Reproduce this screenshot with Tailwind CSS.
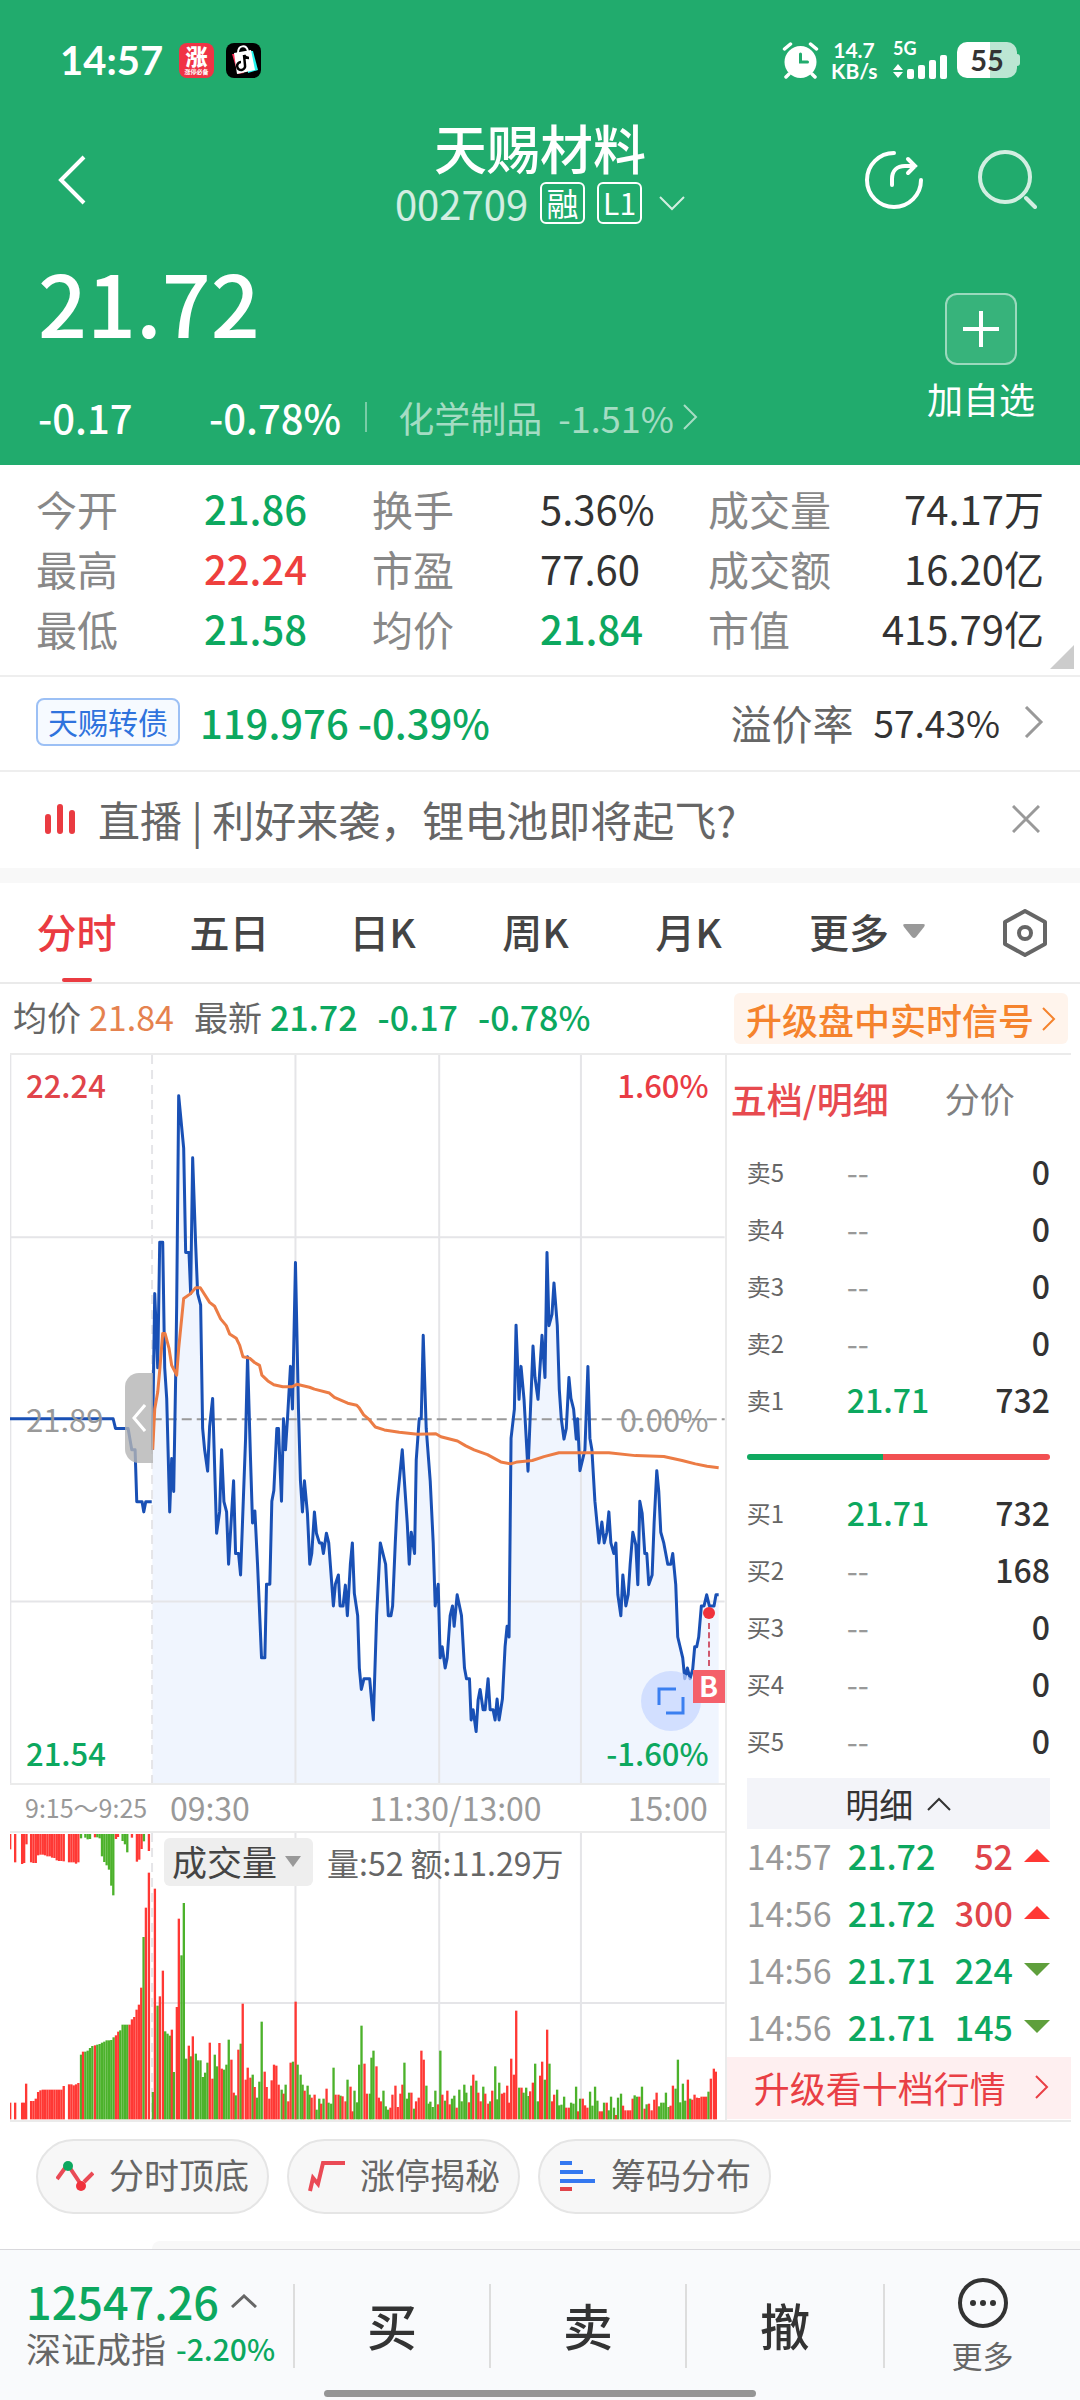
<!DOCTYPE html>
<html lang="zh-CN">
  <head>
    <meta charset="UTF-8" />
    <meta name="viewport" content="width=device-width, initial-scale=1.0" />
    <title>天赐材料 002709</title>
    <script src="https://cdn.jsdelivr.net/npm/@tailwindcss/browser@4"></script>
  </head>
  <body class="bg-white font-['Noto_Sans_CJK_SC','Noto_Sans',sans-serif] text-[#333333]">
    <!-- header -->
    <header class="bg-[#21ab6d] text-white pt-[38px]">
      <div class="h-11 flex items-center justify-between px-[60px] font-['Lato','Noto_Sans_CJK_SC',sans-serif]">
        <div class="flex items-center">
          <span class="text-[40px] leading-[44px] font-bold">14:57</span>
          <span class="ml-4 size-[35px] rounded-lg bg-[#f03345] flex flex-col items-center justify-center">
            <span class="text-[22px] leading-[23px] font-black">涨</span>
            <span class="text-[6px] leading-[8px] font-bold">涨停必备</span>
          </span>
          <svg class="ml-3 size-[35px]" viewBox="0 0 35 35">
            <rect width="35" height="35" rx="8" fill="#000" />
            <path d="M6 11h8l4 19-6 1z" fill="#fe2c55" />
            <path d="M22 8h5l5 19-10 3z" fill="#25f4ee" />
            <path d="M8 10l17-3 4 20-18 4z" fill="#fff" />
            <path d="M12 10c0-8 8-9 10-2" fill="none" stroke="#fff" stroke-width="2" />
            <path d="M18 12l1 10a4 4 0 1 1-4-3M18 12c1 3 3 3 5 3" fill="none" stroke="#000" stroke-width="2.500" />
          </svg>
        </div>
        <div class="flex items-center">
          <svg class="w-[37px] h-[38px]" viewBox="0 0 37 38" fill="none" stroke="#fff" stroke-linecap="round">
            <circle cx="18.500" cy="21" r="16" fill="#fff" stroke="none" />
            <path d="M2.500 8l6-5M34.500 8l-6-5M7 33l-3 3M30 33l3 3" stroke-width="3.500" />
            <path d="M18.500 13v8h7" stroke="#21ab6d" stroke-width="3" />
          </svg>
          <div class="ml-3 w-[46px] text-[21px] leading-[21px] font-bold text-center">
            <div>14.7</div>
            <div>KB/s</div>
          </div>
          <div class="ml-4 w-[56px]">
            <div class="text-[18px] leading-[14px] font-bold">5G</div>
            <svg class="w-[56px] h-[24px]" viewBox="0 0 56 24" fill="#fff">
              <path d="M0 15l5-6 5 6zM0 17l5 6 5-6z" />
              <rect x="14" y="14" width="7" height="10" rx="2" />
              <rect x="25" y="10" width="7" height="14" rx="2" />
              <rect x="36" y="5" width="7" height="19" rx="2" />
              <rect x="47" y="0" width="7" height="24" rx="2" />
            </svg>
          </div>
          <div class="ml-2 w-[60px] h-9 rounded-[10px] bg-linear-to-r from-white from-55% to-white/70 to-55% text-[#333333] text-[29px] leading-9 font-bold text-center">55</div>
          <div class="w-[3px] h-3 rounded-r bg-white/70"></div>
        </div>
      </div>

      <div class="mt-[38px] h-[120px] grid grid-cols-[1fr_auto_1fr] items-center px-[42px]">
        <button aria-label="返回" class="justify-self-start pl-3">
          <svg class="w-9 h-[50px]" viewBox="0 0 36 50" fill="none" stroke="#fff" stroke-width="4">
            <path d="M30 2L7 25l23 23" />
          </svg>
        </button>
        <div class="pb-3 flex flex-col items-center">
          <h1 class="text-[53px] leading-[54px] font-medium">天赐材料</h1>
          <div class="mt-1 h-[50px] flex items-center">
            <span class="text-[40px] leading-[50px] text-white/80">002709</span>
            <span class="ml-3 w-[45px] h-[42px] rounded-md border-2 border-white text-[32px] leading-[36px] text-center">融</span>
            <span class="ml-3 w-[45px] h-[42px] rounded-md border-2 border-white text-[30px] leading-[36px] text-center">L1</span>
            <svg class="ml-[17px] w-[26px] h-4" viewBox="0 0 26 16" fill="none" stroke="#fff" stroke-width="2" opacity=".8">
              <path d="M1 2l12 12L25 2" />
            </svg>
          </div>
        </div>
        <div class="justify-self-end flex gap-[52px]">
          <button aria-label="分享">
            <svg class="size-[62px]" viewBox="0 0 62 62" fill="none" stroke="#fff" stroke-width="4" stroke-linecap="round">
              <path d="M32 4A27 27 0 1 0 59 31" />
              <path d="M30 36v-6c0-8 5-13 13-13h10M46 10l7 7-7 7" />
            </svg>
          </button>
          <button aria-label="搜索">
            <svg class="size-[62px]" viewBox="0 0 62 62" fill="none" stroke="#fff" stroke-width="4" stroke-linecap="round" opacity=".8">
              <circle cx="29" cy="28" r="25" />
              <path d="M50 49l9 9" />
            </svg>
          </button>
        </div>
      </div>

      <div class="h-[225px] flex justify-between pl-[38px] pr-[45px]">
        <div class="pt-[18px]">
          <div class="text-[86px] leading-[86px] font-medium">21.72</div>
          <div class="mt-[48px] flex items-center text-[40px] leading-[50px]">
            <span class="w-[171px] font-medium">-0.17</span>
            <span class="font-medium">-0.78%</span>
            <span class="ml-6 w-[2px] h-[30px] bg-white/40"></span>
            <a href="#" class="ml-[31px] flex items-center text-[36px] text-white/60">
              化学制品<span class="ml-4">-1.51%</span>
              <svg class="ml-2 w-4 h-7" viewBox="0 0 16 28" fill="none" stroke="currentColor" stroke-width="2">
                <path d="M2 2l12 12L2 26" />
              </svg>
            </a>
          </div>
        </div>
        <button class="mt-[53px] flex flex-col items-center self-start">
          <span class="size-[72px] rounded-xl border-2 border-white/50 bg-white/10 flex items-center justify-center">
            <svg class="size-9" viewBox="0 0 36 36" stroke="#fff" stroke-width="4"><path d="M18 0v36M0 18h36" /></svg>
          </span>
          <span class="mt-2 text-[36px] leading-[50px]">加自选</span>
        </button>
      </div>
    </header>

    <!-- key figures -->
    <section class="relative px-9 pt-[13px] pb-[17px] border-b-2 border-[#eeeeee]">
      <dl class="grid grid-cols-3 text-[41px] leading-[60px] text-[#888888]">
        <div class="grid grid-cols-2"><dt>今开</dt><dd class="text-[40px] font-medium text-[#0ca85f]">21.86</dd></div>
        <div class="grid grid-cols-2"><dt>换手</dt><dd class="text-[40px] text-[#333333]">5.36%</dd></div>
        <div class="flex justify-between"><dt>成交量</dt><dd class="text-[40px] text-[#333333]">74.17万</dd></div>
        <div class="grid grid-cols-2"><dt>最高</dt><dd class="text-[40px] font-medium text-[#ee3f3d]">22.24</dd></div>
        <div class="grid grid-cols-2"><dt>市盈</dt><dd class="text-[40px] text-[#333333]">77.60</dd></div>
        <div class="flex justify-between"><dt>成交额</dt><dd class="text-[40px] text-[#333333]">16.20亿</dd></div>
        <div class="grid grid-cols-2"><dt>最低</dt><dd class="text-[40px] font-medium text-[#0ca85f]">21.58</dd></div>
        <div class="grid grid-cols-2"><dt>均价</dt><dd class="text-[40px] font-medium text-[#0ca85f]">21.84</dd></div>
        <div class="flex justify-between"><dt>市值</dt><dd class="text-[40px] text-[#333333]">415.79亿</dd></div>
      </dl>
      <svg class="absolute right-[6px] bottom-[6px] size-6" viewBox="0 0 24 24"><path d="M24 0v24H0z" fill="#cccccc" /></svg>
    </section>

    <a href="#" class="h-[95px] pb-[3px] flex items-center px-9 border-b-2 border-[#eeeeee] text-[40px] leading-[60px]">
      <span class="w-36 h-12 rounded-lg border-2 border-[#9cc0f5] bg-[#f6faff] text-[30px] leading-[43px] text-[#2f73dd] text-center">天赐转债</span>
      <span class="ml-5 text-[#0ca85f] font-medium">119.976 -0.39%</span>
      <span class="ml-auto text-[41px] text-[#666666]">溢价率</span>
      <span class="ml-5 text-[37px]">57.43%</span>
      <svg class="ml-6 w-5 h-8" viewBox="0 0 20 32" fill="none" stroke="#999999" stroke-width="3"><path d="M2 1l15 15L2 31" /></svg>
    </a>

    <div class="h-24 flex items-center pl-11 pr-10 pb-[2px] text-[42px] leading-[60px] text-[#666666]">
      <svg class="w-8 h-[30px]" viewBox="0 0 32 30" stroke="#ea3b41" stroke-width="6" stroke-linecap="round">
        <path d="M4 13v14M16 3v24M28 9v18" />
      </svg>
      <a href="#" class="ml-[22px]">直播 | 利好来袭，锂电池即将起飞?</a>
      <button aria-label="关闭" class="ml-auto">
        <svg class="size-7" viewBox="0 0 28 28" stroke="#999999" stroke-width="3"><path d="M1 1l26 26M27 1L1 27" /></svg>
      </button>
    </div>
    <div class="h-[15px] bg-[#f8f8f8]"></div>

    <!-- period tabs -->
    <nav class="h-[101px] grid grid-cols-[153fr_153fr_153fr_153fr_153fr_204fr_111fr] border-b-2 border-[#eaeaea] text-[40px] leading-[60px] font-medium text-[#444444]">
      <button class="relative pb-[3px] text-[#ea3b41]">
        分时
        <span class="absolute inset-x-0 bottom-0 mx-auto w-[30px] h-1 rounded-sm bg-[#ea3b41]"></span>
      </button>
      <button class="pb-[3px]">五日</button>
      <button class="pb-[3px]">日K</button>
      <button class="pb-[3px]">周K</button>
      <button class="pb-[3px]">月K</button>
      <button class="pb-[3px] flex items-center justify-center">
        更多
        <svg class="ml-[14px] w-[22px] h-[14px]" viewBox="0 0 22 14"><path d="M2 0h18q3 0 1 3l-8 10q-2 2-4 0L1 3q-2-3 1-3z" fill="#999999" /></svg>
      </button>
      <button aria-label="设置" class="flex items-center justify-center">
        <svg class="w-11 h-12" viewBox="0 0 44 48" fill="none" stroke="#666666" stroke-width="4" stroke-linejoin="round">
          <path d="M22 2l20 11v22L22 46 2 35V13z" />
          <circle cx="22" cy="24" r="6" />
        </svg>
      </button>
    </nav>

    <div class="h-[69px] flex items-center pl-[13px] pr-3 text-[#666666]">
      <div class="pb-1 flex text-[34px] leading-[50px]">
        <span>均价</span><span class="ml-2 text-[#e5824f]">21.84</span>
        <span class="ml-5">最新</span>
        <span class="ml-2 flex gap-5 font-medium text-[#0ca85f]"><span>21.72</span><span>-0.17</span><span>-0.78%</span></span>
      </div>
      <a href="#" class="ml-auto h-[51px] rounded-md bg-[#fff4ec] px-3 flex items-center font-medium text-[36px] leading-[50px] text-[#f5832d]">
        升级盘中实时信号
        <svg class="ml-2 w-[14px] h-6" viewBox="0 0 14 24" fill="none" stroke="currentColor" stroke-width="2"><path d="M1 1l11 11L1 23" /></svg>
      </a>
    </div>

    <main class="ml-[10px] mr-[9px] flex border-y-2 border-[#ebebeb]">
      <!-- charts -->
      <div class="relative flex-[716] min-w-0">
        <div class="relative">
          <svg id="price" class="block w-full h-[728px]" viewBox="30 30 2148 1501" preserveAspectRatio="none"></svg>
          <span class="absolute left-4 top-[6px] text-[31px] leading-[48px] font-medium text-[#e0444a]">22.24</span>
          <span class="absolute right-4 top-[6px] text-[31px] leading-[48px] font-medium text-[#e93b44]">1.60%</span>
          <span class="absolute left-4 top-[340px] text-[31px] leading-[48px] text-[#999999]">21.89</span>
          <span class="absolute right-4 top-[340px] text-[31px] leading-[48px] text-[#999999]">0.00%</span>
          <span class="absolute left-4 bottom-[6px] text-[31px] leading-[48px] font-medium text-[#0ca85f]">21.54</span>
          <span class="absolute right-4 bottom-[6px] text-[31px] leading-[48px] font-medium text-[#0ca85f]">-1.60%</span>
          <button aria-label="收起竞价" class="absolute right-[80%] top-[318px] w-7 h-[90px] rounded-l-[14px] bg-[#b4b4b4]/80 flex items-center justify-center">
            <svg class="w-[14px] h-7" viewBox="0 0 14 28" fill="none" stroke="#fff" stroke-width="3"><path d="M13 1L2 14l11 13" /></svg>
          </button>
          <button aria-label="全屏" class="absolute right-[24px] bottom-[52px] size-[60px] rounded-full bg-[#c4d6ff]/70 flex items-center justify-center">
            <svg class="size-7" viewBox="0 0 28 28" fill="none" stroke="#3a7ff0" stroke-width="3"><path d="M2 18V2h17M26 10v16H9" /></svg>
          </button>
          <div class="absolute right-0 bottom-[80px] w-8 flex flex-col items-center">
            <span class="size-3 rounded-full bg-[#f0323c]"></span>
            <span class="h-[43px] border-l-2 border-dashed border-[#d0596e] my-1"></span>
            <span class="w-8 h-[33px] bg-[#f4606a] text-white text-[28px] leading-[30px] font-bold text-center">B</span>
          </div>
        </div>
        <div class="h-[50px] flex items-center border-y-2 border-[#ebebeb] pb-[2px] text-[32px] leading-[46px] text-[#999999]">
          <span class="w-1/5 pl-[15px] text-[25px] whitespace-nowrap">9:15～9:25</span>
          <div class="flex-1 grid grid-cols-3 px-[17px]">
            <span>09:30</span><span class="pl-5 text-center whitespace-nowrap">11:30/13:00</span><span class="text-right">15:00</span>
          </div>
        </div>
        <div class="relative">
          <svg id="volume" class="block w-full h-[287px]" viewBox="30 158 2148 861" preserveAspectRatio="none"></svg>
          <div class="absolute left-[154px] top-[5px] flex items-center text-[32px] leading-[46px] text-[#666666]">
            <button class="h-12 rounded-md bg-[#eeeeee] pl-2 pr-3 pb-[2px] flex items-center text-[35px] text-[#444444]">
              成交量
              <svg class="ml-2 w-4 h-[11px]" viewBox="0 0 16 11"><path d="M0 0h16L8 11z" fill="#999999" /></svg>
            </button>
            <span class="ml-[14px]">量:52 额:11.29万</span>
          </div>
        </div>
      </div>

      <!-- order book -->
      <div class="flex-[345] min-w-0 border-l-2 border-[#ebebeb]">
        <div class="pt-[18px] pl-1 flex text-[36px] leading-[50px]">
          <button class="font-medium text-[#e74a4f]">五档/明细</button>
          <button class="ml-[56px] text-[35px] text-[#808080]">分价</button>
        </div>
        <div class="mt-5 pl-5 pr-[21px]">
          <table class="w-full text-[32px] leading-[57px]">
            <tbody id="asks"></tbody>
          </table>
          <div class="h-14 pt-[2px] flex items-center">
            <div class="flex-[45] h-[6px] rounded-l-full bg-[#0fa960]"></div>
            <div class="flex-[55] h-[6px] rounded-r-full bg-[#f25052]"></div>
          </div>
          <table class="w-full text-[32px] leading-[57px]">
            <tbody id="bids"></tbody>
          </table>
          <button class="mt-[9px] w-full h-[51px] bg-[#f3f4f9] flex items-center justify-center text-[34px]">
            明细
            <svg class="ml-[14px] w-6 h-[14px]" viewBox="0 0 24 14" fill="none" stroke="#333333" stroke-width="2"><path d="M1 13L12 2l11 11" /></svg>
          </button>
          <table class="-mt-[2px] w-full text-[34px] leading-[57px]">
            <tbody id="ticks"></tbody>
          </table>
        </div>
        <a href="#" class="mt-[2px] h-[62px] bg-[#feeff0] pl-[27px] pr-[22px] pb-[2px] flex items-center justify-between text-[36px] leading-[50px] text-[#e93f45]">
          升级看十档行情
          <svg class="w-[14px] h-6" viewBox="0 0 14 24" fill="none" stroke="currentColor" stroke-width="2"><path d="M1 1l11 11L1 23" /></svg>
        </a>
      </div>
    </main>

    <!-- shortcuts -->
    <div class="pt-[17px] pb-[27px] px-9 flex gap-[18px] text-[35px] leading-[50px] text-[#666666]">
      <button class="w-[233px] h-[75px] pb-[6px] rounded-full border-2 border-[#e5e5e5] bg-[#f7f7f7] flex items-center justify-center gap-[15px]">
        <svg class="mt-1 w-[38px] h-8" viewBox="0 0 38 32" fill="none" stroke="#ea4a55" stroke-width="4">
          <path d="M1 19l8-11M14 8l10 15M28 22l9-9" />
          <circle cx="12" cy="6" r="5" fill="#0ca85f" stroke="none" />
          <circle cx="25" cy="26" r="5" fill="#f0323c" stroke="none" />
        </svg>
        分时顶底
      </button>
      <button class="w-[233px] h-[75px] pb-[6px] rounded-full border-2 border-[#e5e5e5] bg-[#f7f7f7] flex items-center justify-center gap-[15px]">
        <svg class="mt-1 w-[38px] h-8" viewBox="0 0 38 32" fill="none" stroke="#ea4a55" stroke-width="4">
          <path d="M3 31l3-13 5 6 5-21h22" />
        </svg>
        涨停揭秘
      </button>
      <button class="w-[233px] h-[75px] pb-[6px] rounded-full border-2 border-[#e5e5e5] bg-[#f7f7f7] flex items-center justify-center gap-[15px]">
        <svg class="mt-1 w-[38px] h-8" viewBox="0 0 38 32" fill="none" stroke="#3478f0" stroke-width="4">
          <path d="M2 3h12M2 12h23M2 21h35" />
          <path d="M2 29h12" stroke="#e0444a" />
        </svg>
        筹码分布
      </button>
    </div>
    <div class="ml-[152px] h-2 rounded-tl-lg bg-[#f8f8f8]"></div>

    <!-- trade bar -->
    <footer class="bg-[#f9fafc] border-t border-[#d8d8dc]">
      <div class="h-[135px] pt-[16px] grid grid-cols-[293fr_196fr_196fr_198fr_197fr] items-center">
        <a href="#" class="pl-[26px] pb-1">
          <div class="flex items-center text-[45px] leading-[48px] font-medium text-[#0ca85f]">
            12547.26
            <svg class="ml-3 w-[26px] h-[14px]" viewBox="0 0 26 14" fill="none" stroke="#666666" stroke-width="3"><path d="M1 13L13 2l12 11" /></svg>
          </div>
          <div class="flex items-center text-[35px] leading-[46px] text-[#666666] whitespace-nowrap">
            深证成指<span class="ml-[10px] text-[30px] text-[#0ca85f] font-medium">-2.20%</span>
          </div>
        </a>
        <button class="h-[84px] pb-1 border-l-2 border-[#dddddd] text-[50px] leading-[74px] font-medium">买</button>
        <button class="h-[84px] pb-1 border-l-2 border-[#dddddd] text-[50px] leading-[74px] font-medium">卖</button>
        <button class="h-[84px] pb-1 border-l-2 border-[#dddddd] text-[50px] leading-[74px] font-medium">撤</button>
        <button class="h-[84px] border-l-2 border-[#dddddd] flex flex-col items-center justify-center text-[31px] leading-[40px] text-[#666666]">
          <svg class="size-[52px] shrink-0" viewBox="0 0 52 52" fill="#333333">
            <circle cx="26" cy="26" r="23" fill="none" stroke="#333333" stroke-width="4" />
            <circle cx="16" cy="26" r="3" /><circle cx="26" cy="26" r="3" /><circle cx="36" cy="26" r="3" />
          </svg>
          <span class="mt-[6px]">更多</span>
        </button>
      </div>
      <div class="mt-[5px] pb-[3px]">
        <div class="mx-auto w-2/5 h-[7px] rounded-full bg-[#959595]"></div>
      </div>
    </footer>

    <script>
      // every pair is x,y in chart units; the "late" lists count x from 1080
      const auction =
        "28,780 340,780 347,800 385,800 396,844 406,844 411,951 427,951 432,972 438,951 456,951";
      const priceEarly =
        "458,844 465,522 474,675 480,416 489,416 495,675 501,738 510,972 516,862 522,930 528,690 531,545 537,114 552,222 558,437 568,437 573,522 579,242 588,420 594,522 603,545 609,800 615,844 624,888 630,796 639,738 651,1016 660,972 666,844 673,951 681,972 687,1080 702,908 708,1058 717,1058 723,1102 738,822 744,652 753,865 759,995 766,970 774,1080 786,1273 796,1273 801,1121 811,1121 817,950 823,928 832,800 837,800 846,950 852,780 858,844 864,780 873,672 879,760 888,458 897,760 903,908 909,972 915,908 924,975 931,1080 937,1058 945,972 951,1016 960,1036 967,1036 972,1058 981,1016 988,1036 1002,1166 1008,1121 1017,1102 1022,1166 1031,1166 1038,1123 1044,1186 1053,1080 1059,1036 1065,1140 1075,1186 1080,1294";
      const priceLate =
        "6,1338 14,1316 31,1316 42,1401 52,1186 63,1036 79,1080 87,1186 95,1186 100,1166 108,1036 114,951 129,844 144,995 150,1080 156,1014 166,1058 171,865 180,780 186,780 192,608 201,800 213,908 222,1036 228,1166 237,1121 243,1273 249,1250 258,1294 264,1273 273,1186 280,1166 285,1208 294,1143 307,1186 316,1294 322,1316 331,1316 336,1401 342,1380 351,1425 357,1360 363,1338 372,1380 378,1380 387,1316 393,1380 402,1380 408,1401 414,1358 420,1401 430,1358 438,1250 444,1208 450,1230 456,820 466,760 471,587 480,740 486,672 495,740 507,888 522,630 528,695 537,740 549,608 558,695 564,437 570,588 579,565 585,500 595,588 601,720 607,780 615,822 622,800 630,695 636,738 644,760 652,822 656,780 663,887 678,844 687,672 693,820 699,844 708,950 720,1036 729,993 736,1036 744,1014 750,972 756,1036 765,1058 771,1036 777,1143 786,1186 792,1102 801,1166 808,1143 814,1080 822,1014 831,1040 837,1122 843,950 850,975 858,1058 864,1058 870,1122 880,1102 886,995 894,887 900,930 906,1014 915,1036 927,1080 936,1080 942,1058 951,1122 957,1230 972,1273 978,1316 986,1294 994,1316 1002,1296 1008,1250 1014,1250 1020,1230 1028,1166 1036,1166 1044,1143 1052,1166 1066,1166 1072,1143 1080,1143";
      const avgEarly =
        "459,844 465,760 474,725 480,680 489,604 496,604 508,635 516,670 531,690 537,635 552,532 573,522 588,510 602,510 630,540 645,548 663,574 680,588 690,605 710,614 720,628 730,652 750,655 765,664 780,670 787,690 805,702 823,710 850,714 878,714 892,709 930,715 945,719 990,727 1005,736 1045,748 1072,752";
      const avgLate =
        "0,758 13,772 30,782 48,797 75,803 120,808 175,812 230,811 245,817 295,826 320,836 345,844 385,854 425,869 455,873 475,869 520,866 555,858 600,850 690,850 750,850 830,856 915,858 970,866 1010,873 1045,878 1080,881";

      // bars: x, colour, top edge
      const barsEarly =
        "30r967 45r967 66r967 71r967 78r910 93r962 100r962 107r955 114r935 121r930 128r928 135r928 142r928 149r928 156r928 163r928 170r928 177r928 184r928 191r917 207r912 214r912 221r915 228r912 235r908 243g823 249r814 256g814 263g811 270g803 277g797 285r795 292g793 299g791 306g787 313g784 320g780 327g780 334g779 341g771 348r765 355r754 361g750 368g733 375g733 382g733 389r733 396r717 403r710 410r688 417r673 424r622 431g470 438r382 447r277 459g935 465r325 473g676 480r648 489r571 496g753 503g760 510g766 516r748 522g875 531r680 537r415 545g525 552g368 559g835 567r796 573g828 579r768 588g820 594g840 602g840 609g890 616g877 623g847 630r787 638r895 645g823 652g858 659r788 666r865 673g868 680g853 687g778 695r838 702r937 708g945 716r808 723g790 729r670 738r898 744r862 752r892 759g883 765r920 772g952 779g904 786g724 795r874 801r920 809r955 816r900 823r853 830r856 837r913 846g928 852r940 858g913 866r963 873r847 880g844 888r664 894g853 903g883 909g913 915r931 924g916 930g943 936r952 945r943 951g988 959g955 965r970 972g955 981r925 987g967 995g970 1002g862 1008r943 1017r943 1023g946 1029r948 1038r963 1044g898 1053r919 1059r993 1065g931 1073g966 1079g853 1086g736 1095r850";
      const barsLate =
        "22r940 31g940 36g832 42g811 51r858 58r952 64r963 72g931 79g978 86g988 93r982 99r943 108r916 115r980 123r940 129r913 135g847 143g955 149g937 156r937 164g985 170r963 178r952 186r811 193r838 201g916 208g970 213g964 220g980 228g931 236r972 243g811 249r943 257g961 264r931 271r972 278g955 285g946 292r982 300g928 307g963 315g913 321g937 329r966 336g916 342r883 351g901 357r937 364r963 372g919 378r940 387r970 393g963 399r931 408g858 414g957 420g907 428r940 435r937 444r916 449r967 456r835 464r883 471r691 480g922 487r922 493g937 501g922 508g947 513r933 521r907 528g850 536g963 543r886 549r844 557g898 564r748 571g850 579r963 585r943 594g928 600g975 607g973 615g949 621r982 629r982 636g967 643g970 651g919 657r993 663g955 671r955 678r975 685r982 693g934 700g976 708g919 715g961 722r993 729r993 735g967 743r967 749g990 756g949 765g982 771r1004 777g952 786g940 792r976 799r990 807r990 814r990 821r955 827g945 834g949 841r949 849g919 857r985 863g972 870r970 878r990 886r958 893r937 900g978 907g967 914g967 921g937 929g980 935r976 942r916 950g925 957g838 964g966 972g910 979g961 987r898 994g955 1000r958 1007r943 1014r952 1021r953 1028r949 1035r949 1042r949 1049g934 1056r895 1065r865 1071r874";
      // auction bars that hang from the top, with their bottom edge
      const hanging =
        "30r207 45r246 66r251 72r248 79r192 93r246 100r248 107r248 114r225 121r223 128r223 135r225 142r228 149r228 156r232 163r233 170r240 177r242 184r242 191r243 207r246 214r246 221r246 228r250 235r246 243g174 256g172 263g177 270g176 285r171 292g171 299g174 306g228 313g245 320g255 327g268 334g316 340g345 348r176 354r170 368g182 375g192 382g216 396r172 411r244 418r238 425r206 432g183 447r212";

      const shift = (list) =>
        list.replace(/(\d+)([,rg])/g, (m, x, rest) => Number(x) + 1080 + rest);
      const line = (points, color) =>
        `<polyline points="${points}" fill="none" stroke="${color}" stroke-width="3" stroke-linejoin="round" vector-effect="non-scaling-stroke"/>`;
      const grid = (d, extra = "") =>
        `<path d="${d}" fill="none" stroke="#e5e5e8" stroke-width="2" vector-effect="non-scaling-stroke" ${extra}/>`;

      const price = priceEarly + " " + shift(priceLate);
      document.querySelector("#price").innerHTML =
        `<polygon points="458,1531 ${price} 2160,1531" fill="#f0f5fe"/>` +
        grid("M30 406H2178M30 1157H2178M888 30V1531M1320 30V1531M1746 30V1531M31 30V1531") +
        grid("M457 30V1531", 'stroke-dasharray="9 6"') +
        `<path d="M456 781H2178" stroke="#999999" stroke-width="2" stroke-dasharray="10 5" vector-effect="non-scaling-stroke"/>` +
        line(auction, "#1950b5") +
        line(price, "#1950b5") +
        line(avgEarly + " " + shift(avgLate), "#ec7c45");

      const colors = { r: "#ff3834", g: "#4cb22b" };
      const bars = (list, draw) =>
        list.split(" ").map((item) => {
          const [, x, c, y] = item.match(/(\d+)([rg])(\d+)/);
          return draw(x - 3, Number(y), colors[c]);
        }).join("");
      document.querySelector("#volume").innerHTML =
        grid("M458 668H2178M888 158V1019M1320 158V1019M1746 158V1019") +
        grid("M457 158V1019", 'stroke-dasharray="9 6"') +
        bars(hanging, (x, y, c) => `<rect x="${x}" y="161" width="7" height="${y - 161}" fill="${c}"/>`) +
        bars(barsEarly + " " + shift(barsLate), (x, y, c) => `<rect x="${x}" y="${y}" width="7" height="${1017 - y}" fill="${c}"/>`);

      const level = ([name, value, amount]) =>
        `<tr><td class="w-[100px] text-[24px] text-[#666666]">${name}</td>
        <td class="${value === "--" ? "text-[#999999]" : "text-[#0ca85f] font-medium"}">${value}</td>
        <td class="text-right font-medium">${amount}</td></tr>`;
      document.querySelector("#asks").innerHTML = [
        ["卖5", "--", 0], ["卖4", "--", 0], ["卖3", "--", 0], ["卖2", "--", 0], ["卖1", "21.71", 732],
      ].map(level).join("");
      document.querySelector("#bids").innerHTML = [
        ["买1", "21.71", 732], ["买2", "--", 168], ["买3", "--", 0], ["买4", "--", 0], ["买5", "--", 0],
      ].map(level).join("");

      document.querySelector("#ticks").innerHTML = [
        ["14:57", "21.72", 52, true], ["14:56", "21.72", 300, true],
        ["14:56", "21.71", 224, false], ["14:56", "21.71", 145, false],
      ].map(([time, value, amount, up]) =>
        `<tr><td class="w-[101px] text-[#999999]">${time}</td>
        <td class="text-[#0ca85f] font-medium">${value}</td>
        <td class="text-right font-medium ${up ? "text-[#e0444a]" : "text-[#0ca85f]"}">${amount}</td>
        <td class="w-[37px]"><svg class="ml-auto w-[26px] h-[13px]" viewBox="0 0 26 13"><path d="${up ? "M0 13L13 0l13 13z" : "M0 0h26L13 13z"}" fill="${up ? "#ff3834" : "#5f9f3c"}"/></svg></td></tr>`
      ).join("");
    </script>
  </body>
</html>
